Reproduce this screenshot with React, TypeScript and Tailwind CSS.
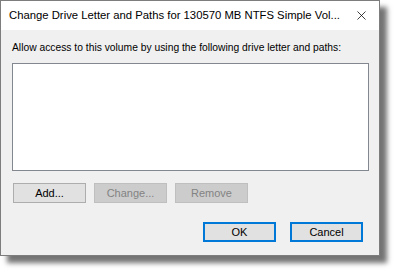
import { X } from "lucide-react";

type BtnProps = {
  label: string;
  disabled?: boolean;
  primary?: boolean;
};

function DlgButton({ label, disabled, primary }: BtnProps) {
  if (disabled) {
    return (
      <div className="w-[73px] h-[20px] flex items-center justify-center bg-[#cccccc] border border-[#bfbfbf] text-[#838383] text-[11px]">
        {label}
      </div>
    );
  }
  return (
    <div
      className={`w-[73px] h-[20px] flex items-center justify-center bg-[#e1e1e1] text-[11px] text-black ${
        primary ? "border-2 border-[#0078d7]" : "border border-[#adadad]"
      }`}
    >
      {label}
    </div>
  );
}

export default function App() {
  return (
    <div className="w-[394px] h-[270px] bg-white font-['Liberation_Sans',Arial,sans-serif]">
      <div className="w-[380px] h-[256px] flex flex-col border border-[#7d7d7d] bg-[#f0f0f0] shadow-[7px_7px_5px_rgba(0,0,0,0.55)]">
        {/* title bar */}
        <div className="h-[29px] shrink-0 bg-white flex items-center pl-[8px] pr-[10px]">
          <span className="text-[11.3px] text-black flex-1 whitespace-nowrap">
            Change Drive Letter and Paths for 130570 MB NTFS Simple Vol...
          </span>
          <X className="w-[15px] h-[15px] shrink-0 text-black" strokeWidth={1.2} />
        </div>

        {/* body */}
        <div className="flex-1 flex flex-col px-[11px] pt-[11px]">
          <p className="text-[10.3px] text-black leading-[14px] whitespace-nowrap">
            Allow access to this volume by using the following drive letter and paths:
          </p>
          <div className="mt-[8px] h-[108px] w-[357px] bg-white border border-[#828790]" />

          <div className="mt-[12px] flex gap-[8px] pl-[1px]">
            <DlgButton label="Add..." />
            <DlgButton label="Change..." disabled />
            <DlgButton label="Remove" disabled />
          </div>

          <div className="mt-[19px] flex gap-[14px] pl-[191px]">
            <DlgButton label="OK" primary />
            <DlgButton label="Cancel" primary />
          </div>
        </div>
      </div>
    </div>
  );
}
